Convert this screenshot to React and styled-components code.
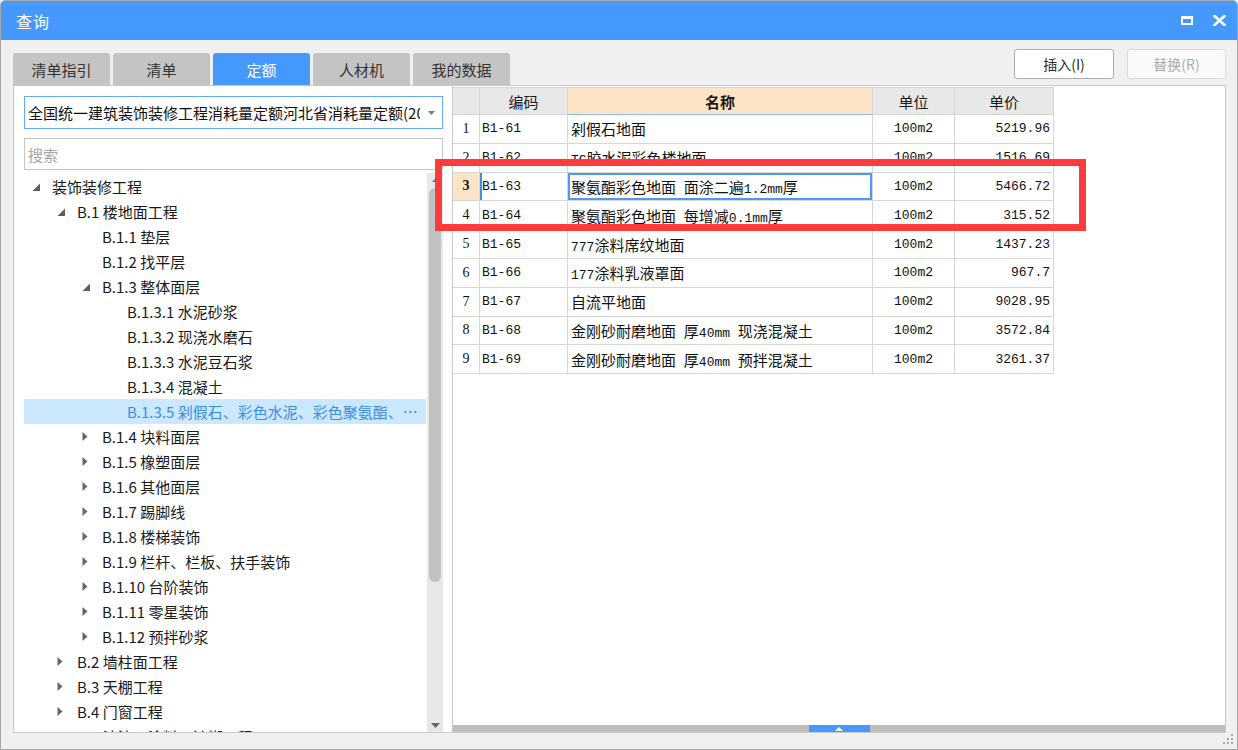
import React from "react";
import styled, { createGlobalStyle } from "styled-components";

const GlobalStyle = createGlobalStyle`
  html, body { margin: 0; padding: 0; background: #ffffff; }
  body { font-family: "Noto Sans CJK SC", "Noto Sans", sans-serif; }
  * { box-sizing: border-box; }
`;

const BLUE = "#4599fd";
const LINE = "#c8c8c8";
const GRID = "#d6d6d6";

const Window = styled.div`
  position: relative;
  width: 1238px;
  height: 750px;
  border: 1px solid #a8a8a8;
  border-radius: 5px 5px 0 0;
  background: #f0f0f0;
  overflow: hidden;
  display: flex;
  flex-direction: column;
`;

const TitleBar = styled.div`
  height: 39px;
  flex: none;
  background: ${BLUE};
  display: flex;
  align-items: center;
  justify-content: space-between;
  padding: 0 11px 0 15px;
`;

const Title = styled.span`
  color: #ffffff;
  font-size: 16px;
  letter-spacing: 1px;
`;

const TitleIcons = styled.div`
  display: flex;
  align-items: center;
  gap: 20px;
`;

const Toolbar = styled.div`
  height: 45px;
  flex: none;
  display: flex;
  justify-content: space-between;
  padding: 0 11px 0 12px;
`;

const Tabs = styled.div`
  align-self: flex-end;
  display: flex;
  gap: 3px;
`;

const Tab = styled.div`
  width: 97px;
  height: 32px;
  border-radius: 3px 3px 0 0;
  background: ${(p) => (p.$active ? BLUE : "#c4c4c4")};
  color: ${(p) => (p.$active ? "#ffffff" : "#333333")};
  font-size: 15px;
  display: flex;
  align-items: center;
  justify-content: center;
`;

const Buttons = styled.div`
  align-self: flex-start;
  margin-top: 9px;
  display: flex;
  gap: 13px;
`;

const Button = styled.div`
  width: ${(p) => p.$w}px;
  height: 30px;
  border-radius: 3px;
  border: 1px solid ${(p) => (p.$disabled ? "#dadada" : "#adadad")};
  background: ${(p) => (p.$disabled ? "#fafafa" : "#ffffff")};
  color: ${(p) => (p.$disabled ? "#acacac" : "#2a2a2a")};
  font-size: 14px;
  display: flex;
  align-items: center;
  justify-content: center;
`;

const Main = styled.div`
  height: 648px;
  flex: none;
  display: flex;
  padding: 0 11px 0 12px;
`;

const LeftPanel = styled.div`
  width: 439px;
  flex: none;
  background: #ffffff;
  border: 1px solid ${LINE};
  border-right: none;
  padding: 10px 9px 0 10px;
  display: flex;
  flex-direction: column;
`;

const Combo = styled.div`
  height: 33px;
  flex: none;
  border: 1px solid #62a9f7;
  display: flex;
  align-items: center;
`;

const ComboText = styled.div`
  flex: 1;
  overflow: hidden;
  white-space: nowrap;
  font-size: 15px;
  color: #111111;
  padding-left: 3px;
`;

const ComboArrow = styled.div`
  width: 22px;
  flex: none;
  display: flex;
  align-items: center;
  justify-content: center;
`;

const Search = styled.input`
  margin-top: 9px;
  height: 32px;
  flex: none;
  width: 100%;
  border: 1px solid #c6c6c6;
  outline: none;
  padding: 0 3px;
  font-family: "Noto Sans CJK SC", sans-serif;
  font-size: 15px;
  color: #222;
  &::placeholder { color: #a6a6a6; }
`;

const Tree = styled.div`
  margin-top: 3px;
  flex: 1;
  min-height: 0;
  display: flex;
`;

const TreeList = styled.div`
  flex: 1;
  min-width: 0;
  overflow: hidden;
  padding-top: 1px;
`;

const TreeRow = styled.div`
  height: 25px;
  display: flex;
  align-items: center;
  padding-left: ${(p) => p.$level * 25}px;
  padding-right: 8px;
  margin-right: 1px;
  background: ${(p) => (p.$selected ? "#cce8ff" : "transparent")};
  color: ${(p) => (p.$selected ? "#3b8de3" : "#1a1a1a")};
  font-size: 15px;
`;

const ArrowCell = styled.div`
  width: 28px;
  flex: none;
  height: 100%;
  display: flex;
  align-items: center;
  padding-left: 8px;
`;

const TreeLabel = styled.span`
  white-space: nowrap;
  overflow: hidden;
  text-overflow: ellipsis;
`;

const VScroll = styled.div`
  width: 16px;
  flex: none;
  background: #e8e8e8;
  display: flex;
  flex-direction: column;
  align-items: center;
`;

const ScrollArrow = styled.div`
  height: 14px;
  flex: none;
  display: flex;
  align-items: center;
  justify-content: center;
`;

const Thumb = styled.div`
  width: 12px;
  height: 394px;
  margin-top: 1px;
  border-radius: 6px;
  background: #c1c1c1;
  flex: none;
`;

const Filler = styled.div`
  flex: 1;
`;

const RightPanel = styled.div`
  flex: 1;
  background: #ffffff;
  border: 1px solid ${LINE};
  padding-top: 1px;
  display: flex;
  flex-direction: column;
`;

const Grid = styled.div`
  display: grid;
  grid-template-columns: 27px 88px 305px 82px 99px;
  width: 601px;
`;

const HeadCell = styled.div`
  height: 28px;
  border-top: 1px solid ${GRID};
  border-right: 1px solid ${GRID};
  border-bottom: 1px solid ${(p) => (p.$active ? "#8fbdf0" : GRID)};
  background: ${(p) => (p.$active ? "#fde4c6" : "#e8e8e8")};
  font-weight: ${(p) => (p.$active ? 700 : 400)};
  font-size: 15px;
  color: #1a1a1a;
  display: flex;
  align-items: center;
  justify-content: center;
`;

const Cell = styled.div`
  height: 28.8px;
  border-right: 1px solid ${GRID};
  border-bottom: 1px solid ${GRID};
  display: flex;
  align-items: center;
  justify-content: ${(p) => p.$justify || "flex-start"};
  padding: 0 3px 0 ${(p) => p.$pl ?? 3}px;
  white-space: nowrap;
  overflow: hidden;
  color: #111111;
  font-size: 15px;
`;

const NumCell = styled(Cell)`
  font-family: "Liberation Serif", serif;
  font-size: 14px;
  background: ${(p) => (p.$current ? "#fde4c6" : "#ffffff")};
  font-weight: ${(p) => (p.$current ? 700 : 400)};
`;

const CodeCell = styled(Cell)`
  font-family: "Liberation Mono", monospace;
  font-size: 13px;
  box-shadow: ${(p) => (p.$current ? `inset 2px 0 0 #3d8fe8` : "none")};
`;

const NameCell = styled(Cell)`
  box-shadow: ${(p) => (p.$current ? `inset 0 0 0 2px #4f9aec` : "none")};
`;

const MonoCell = styled(Cell)`
  font-family: "Liberation Mono", monospace;
  font-size: 13px;
`;

const Inline = styled.span`
  white-space: pre;
`;

const Latin = styled.span`
  font-family: "Liberation Mono", monospace;
  font-size: 13px;
`;

const PanelFiller = styled.div`
  flex: 1;
`;

const HBar = styled.div`
  height: 7px;
  flex: none;
  background: #bdbdbd;
  display: flex;
  justify-content: center;
`;

const HHandle = styled.div`
  width: 61px;
  height: 100%;
  background: ${BLUE};
  display: flex;
  align-items: center;
  justify-content: center;
`;

const BottomStrip = styled.div`
  flex: 1;
  display: flex;
  justify-content: flex-end;
  align-items: flex-start;
  padding: 1px 4px 0 0;
`;

const Annotation = styled.div`
  position: absolute;
  left: 434px;
  top: 158px;
  width: 651px;
  height: 72px;
  border: 7px solid #fc3c3c;
  pointer-events: none;
`;

const tree = [
  [0, "装饰装修工程", "open"],
  [1, "B.1 楼地面工程", "open"],
  [2, "B.1.1 垫层"],
  [2, "B.1.2 找平层"],
  [2, "B.1.3 整体面层", "open"],
  [3, "B.1.3.1 水泥砂浆"],
  [3, "B.1.3.2 现浇水磨石"],
  [3, "B.1.3.3 水泥豆石浆"],
  [3, "B.1.3.4 混凝土"],
  [3, "B.1.3.5 剁假石、彩色水泥、彩色聚氨酯、彩色自流平地面", null, true],
  [2, "B.1.4 块料面层", "closed"],
  [2, "B.1.5 橡塑面层", "closed"],
  [2, "B.1.6 其他面层", "closed"],
  [2, "B.1.7 踢脚线", "closed"],
  [2, "B.1.8 楼梯装饰", "closed"],
  [2, "B.1.9 栏杆、栏板、扶手装饰", "closed"],
  [2, "B.1.10 台阶装饰", "closed"],
  [2, "B.1.11 零星装饰", "closed"],
  [2, "B.1.12 预拌砂浆", "closed"],
  [1, "B.2 墙柱面工程", "closed"],
  [1, "B.3 天棚工程", "closed"],
  [1, "B.4 门窗工程", "closed"],
  [1, "B.5 油漆、涂料、裱糊工程", "closed"],
  [1, "B.6 其他装饰工程", "closed"],
];

const rows = [
  ["B1-61", "剁假石地面", "100m2", "5219.96"],
  ["B1-62", "TG胶水泥彩色楼地面", "100m2", "1516.69"],
  ["B1-63", "聚氨酯彩色地面 面涂二遍1.2mm厚", "100m2", "5466.72"],
  ["B1-64", "聚氨酯彩色地面 每增减0.1mm厚", "100m2", "315.52"],
  ["B1-65", "777涂料席纹地面", "100m2", "1437.23"],
  ["B1-66", "177涂料乳液罩面", "100m2", "967.7"],
  ["B1-67", "自流平地面", "100m2", "9028.95"],
  ["B1-68", "金刚砂耐磨地面 厚40mm 现浇混凝土", "100m2", "3572.84"],
  ["B1-69", "金刚砂耐磨地面 厚40mm 预拌混凝土", "100m2", "3261.37"],
];

const ASCII_RUN = /([ 0-9A-Za-z.\-]+)/;
const ASCII_ONLY = /^[ 0-9A-Za-z.\-]+$/;

function Mixed({ text }) {
  const parts = text.split(ASCII_RUN).filter(Boolean);
  return (
    <Inline>
      {parts.map((p, i) =>
        ASCII_ONLY.test(p) ? <Latin key={i}>{p}</Latin> : <React.Fragment key={i}>{p}</React.Fragment>
      )}
    </Inline>
  );
}

function TreeArrow({ state }) {
  if (state === "open") {
    return (
      <svg width="8" height="8" viewBox="0 0 8 8">
        <path d="M8 0.5 L8 8 L0.5 8 Z" fill="#5e5e5e" />
      </svg>
    );
  }
  if (state === "closed") {
    return (
      <svg width="6" height="9" viewBox="0 0 6 9">
        <path d="M0.5 0 L5.5 4.5 L0.5 9 Z" fill="#666666" />
      </svg>
    );
  }
  return null;
}

export default function App() {
  return (
    <>
      <GlobalStyle />
      <Window>
        <TitleBar>
          <Title>查询</Title>
          <TitleIcons>
            <svg width="12" height="9" viewBox="0 0 12 9">
              <rect x="1" y="1" width="10" height="7" fill="none" stroke="#fff" strokeWidth="2" />
              <rect x="0" y="0" width="12" height="3" fill="#fff" />
            </svg>
            <svg width="13" height="11" viewBox="0 0 13 11">
              <path d="M1.5 1 L11.5 10 M11.5 1 L1.5 10" stroke="#fff" strokeWidth="2.6" strokeLinecap="square" />
            </svg>
          </TitleIcons>
        </TitleBar>

        <Toolbar>
          <Tabs>
            {["清单指引", "清单", "定额", "人材机", "我的数据"].map((t) => (
              <Tab key={t} $active={t === "定额"}>{t}</Tab>
            ))}
          </Tabs>
          <Buttons>
            <Button $w={100}>插入(I)</Button>
            <Button $w={99} $disabled>替换(R)</Button>
          </Buttons>
        </Toolbar>

        <Main>
          <LeftPanel>
            <Combo>
              <ComboText>全国统一建筑装饰装修工程消耗量定额河北省消耗量定额(2012)</ComboText>
              <ComboArrow>
                <svg width="7" height="4" viewBox="0 0 7 4">
                  <path d="M0 0 L7 0 L3.5 4 Z" fill="#7a7a7a" />
                </svg>
              </ComboArrow>
            </Combo>
            <Search placeholder="搜索" readOnly />
            <Tree>
              <TreeList>
                {tree.map(([level, label, state, selected]) => (
                  <TreeRow key={label} $level={level} $selected={selected}>
                    <ArrowCell>
                      <TreeArrow state={state} />
                    </ArrowCell>
                    <TreeLabel>{label}</TreeLabel>
                  </TreeRow>
                ))}
              </TreeList>
              <VScroll>
                <ScrollArrow>
                  <svg width="7" height="4" viewBox="0 0 7 4">
                    <path d="M0 4 L7 4 L3.5 0 Z" fill="#777" />
                  </svg>
                </ScrollArrow>
                <Thumb />
                <Filler />
                <ScrollArrow>
                  <svg width="9" height="5" viewBox="0 0 9 5">
                    <path d="M0 0 L9 0 L4.5 5 Z" fill="#666" />
                  </svg>
                </ScrollArrow>
              </VScroll>
            </Tree>
          </LeftPanel>

          <RightPanel>
            <Grid>
              <HeadCell />
              <HeadCell>编码</HeadCell>
              <HeadCell $active>名称</HeadCell>
              <HeadCell>单位</HeadCell>
              <HeadCell>单价</HeadCell>
              {rows.map(([code, name, unit, price], i) => {
                const current = i === 2;
                return (
                  <React.Fragment key={code}>
                    <NumCell $justify="center" $pl={3} $current={current}>{i + 1}</NumCell>
                    <CodeCell $pl={2} $current={current}>{code}</CodeCell>
                    <NameCell $current={current}><Mixed text={name} /></NameCell>
                    <MonoCell $justify="center">{unit}</MonoCell>
                    <MonoCell $justify="flex-end">{price}</MonoCell>
                  </React.Fragment>
                );
              })}
            </Grid>
            <PanelFiller />
            <HBar>
              <HHandle>
                <svg width="8" height="4" viewBox="0 0 8 4">
                  <path d="M0 4 L8 4 L4 0 Z" fill="#fff" />
                </svg>
              </HHandle>
            </HBar>
          </RightPanel>
        </Main>

        <BottomStrip>
          <svg width="10" height="10" viewBox="0 0 10 10">
            <g fill="#a6a6a6">
              <rect x="8" y="0" width="2" height="2" />
              <rect x="4" y="4" width="2" height="2" />
              <rect x="8" y="4" width="2" height="2" />
              <rect x="0" y="8" width="2" height="2" />
              <rect x="4" y="8" width="2" height="2" />
              <rect x="8" y="8" width="2" height="2" />
            </g>
          </svg>
        </BottomStrip>

        <Annotation />
      </Window>
    </>
  );
}
